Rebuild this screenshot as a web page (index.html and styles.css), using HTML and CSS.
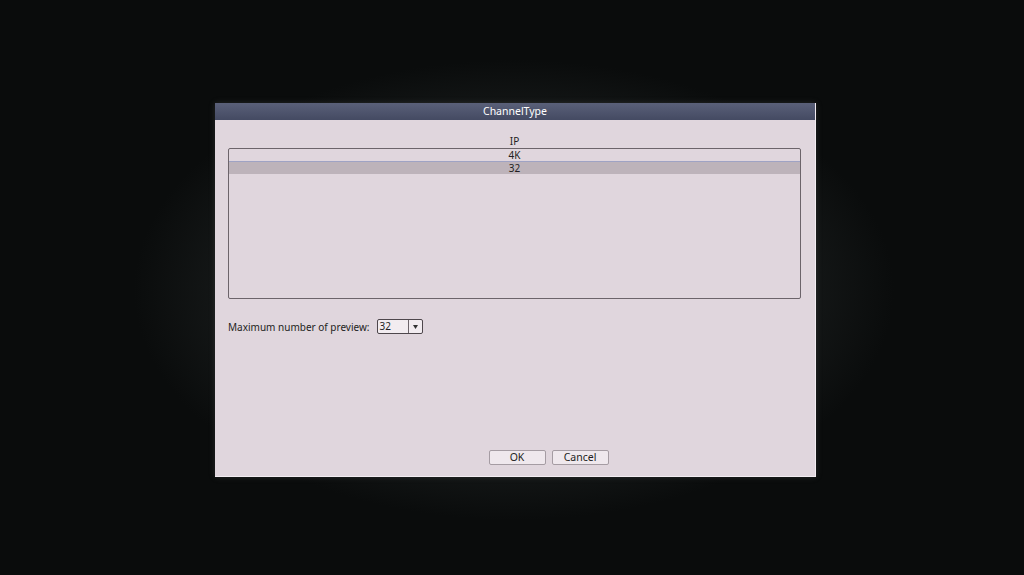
FILE: index.html
```html
<!DOCTYPE html>
<html lang="en">
<head>
    <meta charset="UTF-8">
    <meta name="viewport" content="width=device-width, initial-scale=1.0">
    <title>ChannelType</title>
    <link rel="stylesheet" href="styles.css">
</head>
<body>
    <div class="screen">
        <div class="dialog">
            <div class="dialog-title">ChannelType</div>
            <div class="dialog-body">
                <div class="list-head">IP</div>
                <div class="list">
                    <div class="list-row">4K</div>
                    <div class="list-row selected">32</div>
                </div>
                <div class="field">
                    <label>Maximum number of preview:</label>
                    <div class="select">
                        <span class="select-value">32</span>
                        <span class="select-arrow">
                            <svg width="5" height="4" viewBox="0 0 5 4"><path d="M0 0 L5 0 L2.5 4 Z" fill="#333"/></svg>
                        </span>
                    </div>
                </div>
                <div class="buttons">
                    <button type="button">OK</button>
                    <button type="button">Cancel</button>
                </div>
            </div>
        </div>
    </div>
</body>
</html>
```

FILE: styles.css
```css
body {
    margin: 0;
    background-color: #0a0c0c;
    font-family: "Noto Sans", "Open Sans", sans-serif;
    font-size: 10px;
    color: #231e22;
}

.screen {
    height: 575px;
    box-sizing: border-box;
    padding: 103px 0 0 215px;
    background: radial-gradient(ellipse 380px 230px at 514px 290px, #171a1a 70%, #0a0c0c 100%);
}

.dialog {
    width: 600px;
    height: 373px;
    display: flex;
    flex-direction: column;
    background-color: #e0d6dd;
    border-right: 1px solid #f3edf2;
    border-bottom: 1px solid #f3edf2;
    box-shadow: 0 0 6px rgba(120, 120, 120, 0.25);
}

.dialog-title {
    height: 17px;
    line-height: 17px;
    text-align: center;
    color: #ffffff;
    font-size: 10.5px;
    background: linear-gradient(#5a6079, #444a62);
}

.dialog-body {
    flex: 1;
    display: flex;
    flex-direction: column;
    padding: 13px 14px 11px 13px;
}

.list-head {
    text-align: center;
    line-height: 16px;
    height: 15px;
}

.list {
    height: 149px;
    border: 1px solid #6c646a;
    border-radius: 2px;
    margin-bottom: 20px;
}

.list-row {
    height: 12px;
    line-height: 12px;
    text-align: center;
    border-bottom: 1px solid #9fa3c4;
}

.list-row.selected {
    background-color: #bdb3ba;
    border-bottom: none;
}

.field {
    display: flex;
    align-items: center;
    gap: 7px;
}

.select {
    width: 44px;
    height: 13px;
    display: flex;
    border: 1px solid #4e474c;
    border-radius: 2px;
    background-color: #f2ecf0;
}

.select-value {
    flex: 1;
    line-height: 13px;
    padding-left: 2px;
}

.select-arrow {
    width: 13px;
    border-left: 1px solid #6c646a;
    display: flex;
    align-items: center;
    justify-content: center;
}

.buttons {
    margin-top: auto;
    display: flex;
    justify-content: center;
    gap: 6px;
    padding-left: 68px;
}

button {
    width: 57px;
    height: 15px;
    padding: 0;
    font-family: inherit;
    font-size: 10.5px;
    line-height: 13px;
    color: #231e22;
    background-color: #efe8ed;
    border: 1px solid #a59ca3;
    border-radius: 2px;
}
```
